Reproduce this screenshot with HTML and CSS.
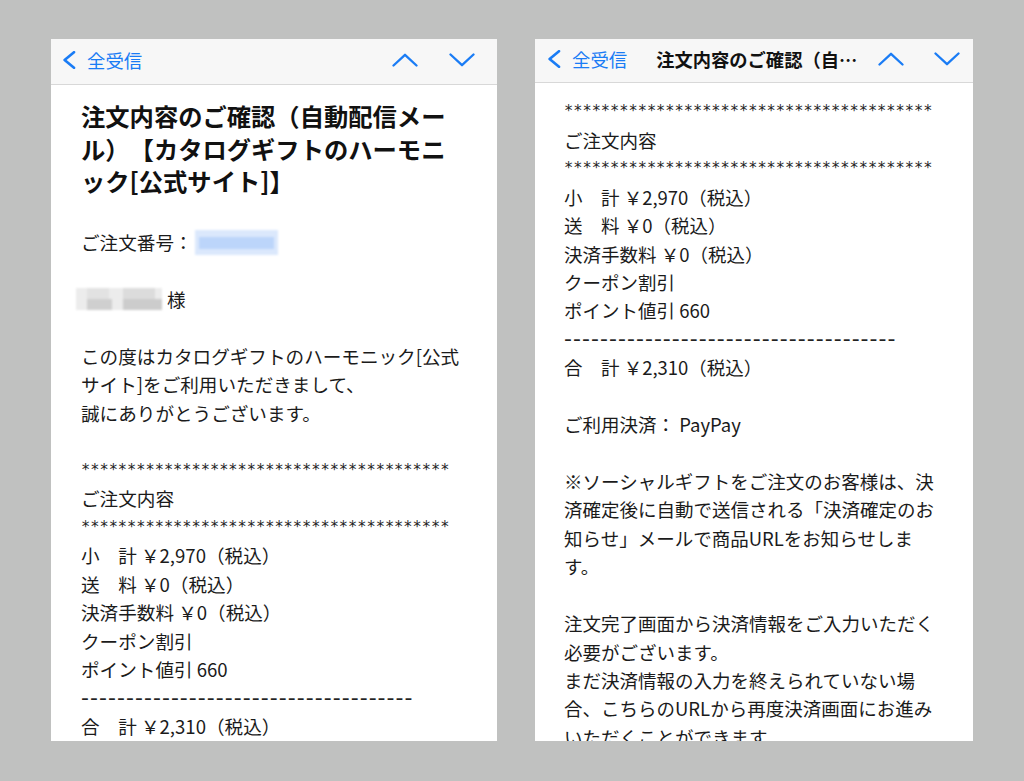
FILE: index.html
```html
<!DOCTYPE html>
<html lang="ja">
<head>
<meta charset="utf-8">
<title>注文内容のご確認</title>
<link rel="stylesheet" href="styles.css">
</head>
<body>
<div class="stage">
  <section class="phone phone-left">
    <header class="hdr hdr-left">
      <svg class="back" width="14" height="18" viewBox="0 0 14 18"><path d="M12 1.2 L2.6 9 L12 16.8" fill="none" stroke="#1a7cf5" stroke-width="2.6" stroke-linecap="round" stroke-linejoin="round"/></svg>
      <span class="hlabel">全受信</span>
      <span class="grow"></span>
      <svg class="nav" width="26" height="14" viewBox="0 0 26 14"><path d="M1.5 12.5 L13 1.8 L24.5 12.5" fill="none" stroke="#1a7cf5" stroke-width="2.3" stroke-linecap="round" stroke-linejoin="round"/></svg>
      <svg class="nav nav-down" width="26" height="14" viewBox="0 0 26 14"><path d="M1.5 1.5 L13 12.2 L24.5 1.5" fill="none" stroke="#1a7cf5" stroke-width="2.3" stroke-linecap="round" stroke-linejoin="round"/></svg>
    </header>
    <div class="body body-left">
      <h1 class="subject">注文内容のご確認（自動配信メール）【カタログギフトのハーモニック[公式サイト]】</h1>
      <div class="para"><div class="ln">ご注文番号：<span class="blur-blue"></span></div></div>
      <div class="para"><div class="ln"><span class="blur-gray"></span>様</div></div>
      <div class="para"><div class="ln">この度はカタログギフトのハーモニック[公式サイト]をご利用いただきまして、</div><div class="ln">誠にありがとうございます。</div></div>
      <div class="para">
        <div class="ln rule">****************************************</div>
        <div class="ln">ご注文内容</div>
        <div class="ln rule">****************************************</div>
        <div class="ln">小　計 ￥2,970（税込）</div>
        <div class="ln">送　料 ￥0（税込）</div>
        <div class="ln">決済手数料 ￥0（税込）</div>
        <div class="ln">クーポン割引</div>
        <div class="ln">ポイント値引 660</div>
        <div class="ln dash">-------------------------------------</div>
        <div class="ln">合　計 ￥2,310（税込）</div>
      </div>
      <div class="para"><div class="ln">ご利用決済： PayPay</div></div>
    </div>
  </section>

  <section class="phone phone-right">
    <header class="hdr hdr-right">
      <svg class="back" width="14" height="18" viewBox="0 0 14 18"><path d="M12 1.2 L2.6 9 L12 16.8" fill="none" stroke="#1a7cf5" stroke-width="2.6" stroke-linecap="round" stroke-linejoin="round"/></svg>
      <span class="hlabel">全受信</span>
      <span class="htitle">注文内容のご確認（自…</span>
      <span class="grow"></span>
      <svg class="nav" width="26" height="14" viewBox="0 0 26 14"><path d="M1.5 12.5 L13 1.8 L24.5 12.5" fill="none" stroke="#1a7cf5" stroke-width="2.3" stroke-linecap="round" stroke-linejoin="round"/></svg>
      <svg class="nav nav-down" width="26" height="14" viewBox="0 0 26 14"><path d="M1.5 1.5 L13 12.2 L24.5 1.5" fill="none" stroke="#1a7cf5" stroke-width="2.3" stroke-linecap="round" stroke-linejoin="round"/></svg>
    </header>
    <div class="body body-right">
      <div class="para">
        <div class="ln rule">****************************************</div>
        <div class="ln">ご注文内容</div>
        <div class="ln rule">****************************************</div>
        <div class="ln">小　計 ￥2,970（税込）</div>
        <div class="ln">送　料 ￥0（税込）</div>
        <div class="ln">決済手数料 ￥0（税込）</div>
        <div class="ln">クーポン割引</div>
        <div class="ln">ポイント値引 660</div>
        <div class="ln dash">-------------------------------------</div>
        <div class="ln">合　計 ￥2,310（税込）</div>
      </div>
      <div class="para"><div class="ln">ご利用決済： PayPay</div></div>
      <div class="para"><div class="ln">※ソーシャルギフトをご注文のお客様は、決済確定後に自動で送信される「決済確定のお知らせ」メールで商品URLをお知らせします。</div></div>
      <div class="para"><div class="ln">注文完了画面から決済情報をご入力いただく必要がございます。</div><div class="ln">まだ決済情報の入力を終えられていない場合、こちらのURLから再度決済画面にお進みいただくことができます。</div></div>
    </div>
  </section>
</div>
</body>
</html>
```
FILE: styles.css
```css
html, body {
  margin: 0;
  padding: 0;
  background: #c0c1c0;
}
body {
  width: 1024px;
  height: 781px;
  overflow: hidden;
  font-family: "Noto Sans CJK JP", "Noto Sans", sans-serif;
  color: #1b1b1b;
  text-spacing-trim: space-all;
}
.stage {
  display: flex;
  align-items: flex-start;
  gap: 38px;
  padding: 39px 0 0 51px;
}
.phone {
  height: 702px;
  background: #ffffff;
  overflow: hidden;
  display: flex;
  flex-direction: column;
}
.phone-left { width: 446px; }
.phone-right { width: 438px; }

.hdr {
  flex: none;
  display: flex;
  align-items: center;
  background: #f7f7f7;
  border-bottom: 1px solid #d8d8d8;
  box-sizing: border-box;
}
.hdr-left { height: 46px; padding: 0 22px 4px 11px; }
.hdr-right { height: 44px; padding: 0 13px 4px 12px; }
.back { flex: none; display: block; }
.hlabel {
  margin-left: 11px;
  font-size: 18.4px;
  line-height: 22px;
  color: #1a7cf5;
}
.htitle {
  margin-left: 29px;
  font-size: 18.3px;
  line-height: 22px;
  font-weight: 700;
  color: #111;
  white-space: nowrap;
}
.grow { flex: 1; }
.nav { flex: none; display: block; }
.hdr-left .nav-down { margin-left: 31px; }
.hdr-right .nav-down { margin-left: 30px; }

.body { flex: none; }
.body-left {
  padding: 15px 30px 0 30px;
  font-size: 18.6px;
  --lh: 28.5px;
}
.body-right {
  padding: 14.4px 33px 0 29px;
  font-size: 18.5px;
  --lh: 28.43px;
}
.subject {
  margin: 0 0 30px 0;
  font-size: 24.3px;
  line-height: 32.5px;
  font-weight: 700;
  color: #111;
}
.para { margin-bottom: var(--lh); }
.ln {
  display: block;
  line-height: var(--lh);
}
.rule, .dash {
  height: var(--lh);
  white-space: nowrap;
  overflow: hidden;
  color: #222;
}
.rule {
  font-family: "DejaVu Sans Mono", "Liberation Mono", monospace;
  font-size: 15.3px;
}
.dash {
  font-family: "DejaVu Sans", sans-serif;
  font-size: 22px;
  letter-spacing: 1.05px;
}

.blur-blue {
  display: inline-block;
  vertical-align: middle;
  width: 83px;
  height: 25px;
  margin-left: 2px;
  margin-top: -4px;
  background:
    linear-gradient(#bcd5fa, #bcd5fa) 4px 7px / 75px 12px no-repeat,
    #dbe8fc;
  filter: blur(1.2px);
}
.blur-gray {
  display: inline-block;
  vertical-align: middle;
  width: 86px;
  height: 22px;
  margin-left: -5px;
  margin-right: 5px;
  margin-top: -4px;
  background:
    linear-gradient(#cfcfcf, #cfcfcf) 11px 11px / 25px 11px no-repeat,
    linear-gradient(#cccccc, #cccccc) 47px 11px / 39px 11px no-repeat,
    linear-gradient(#dcdcdc, #dcdcdc) 47px 0 / 32px 11px no-repeat,
    linear-gradient(#e2e2e2, #e2e2e2) 11px 0 / 22px 11px no-repeat,
    #ececec;
  filter: blur(1px);
}
```
